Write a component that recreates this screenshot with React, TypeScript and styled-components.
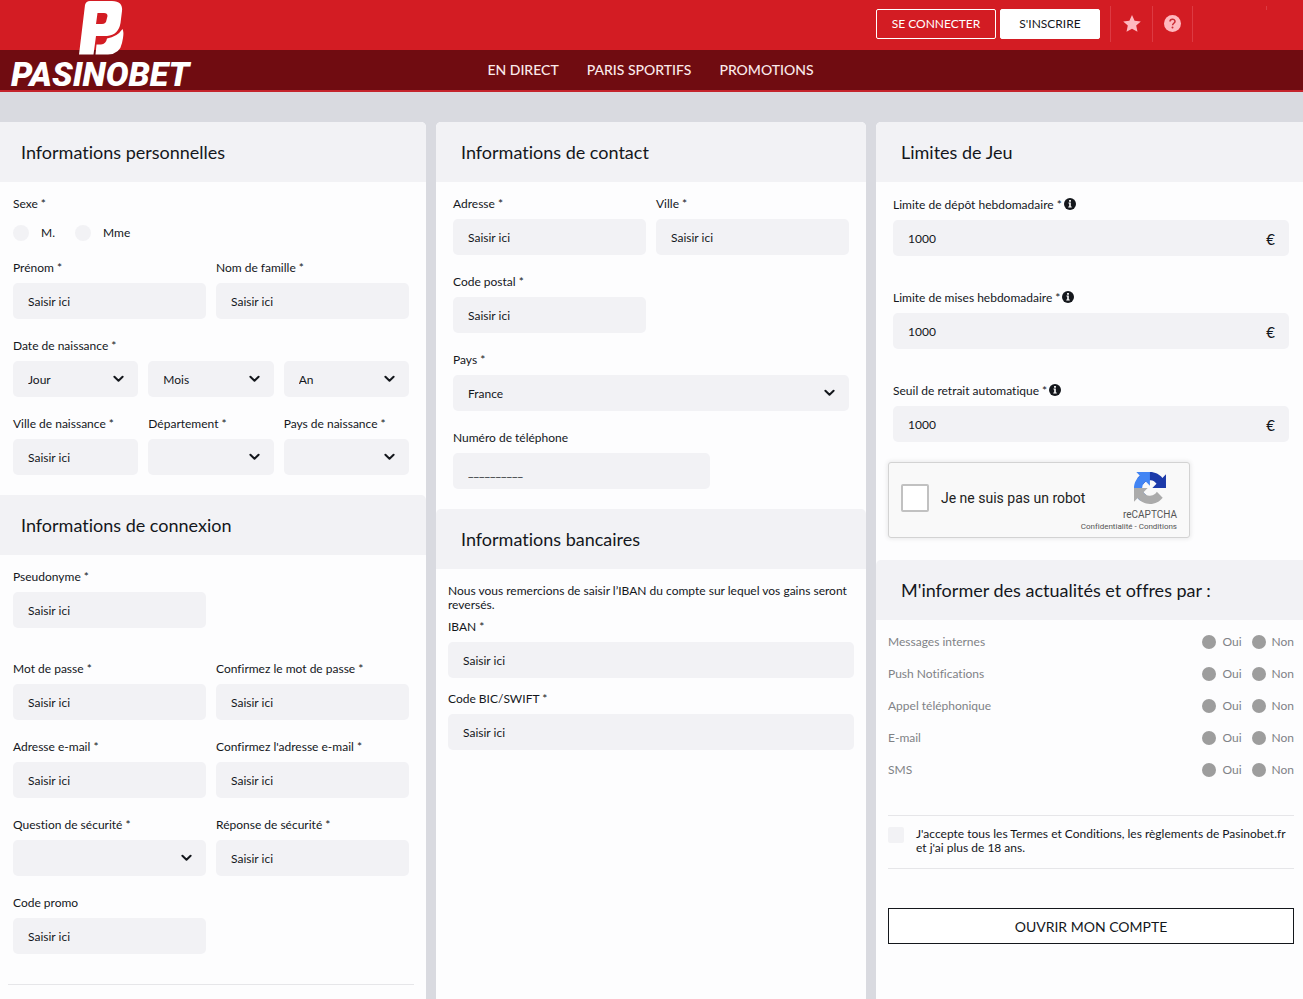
import React, { useId } from 'react';
import styled, { createGlobalStyle } from 'styled-components';

const ink = '#14171c';
const field = '#f2f2f5';

const GlobalStyle = createGlobalStyle`
  *, *::before, *::after { box-sizing: border-box; }
  html, body { margin: 0; padding: 0; }
  body {
    background: #d9dae0;
    color: ${ink};
    font-family: Lato, "Open Sans", sans-serif;
    font-size: 12px;
    font-variant-ligatures: none;
    line-height: 14px;
  }
  button, input, select { font: inherit; color: inherit; margin: 0; }
`;

const Page = styled.div`
  display: flex;
  flex-direction: column;
  min-height: 100vh;
`;

const Header = styled.header`
  position: relative;
  border-bottom: 2px solid #c4232c;
  margin-bottom: 30px;
`;

const TopBar = styled.div`
  display: flex;
  justify-content: flex-end;
  align-items: center;
  height: 50px;
  padding: 0 36px 2px 0;
  background: #d31c23;
`;

const NavBar = styled.nav`
  display: flex;
  justify-content: center;
  align-items: center;
  gap: 28px;
  height: 40px;
  padding-right: 2px;
  background: #700c11;
`;

const NavLink = styled.a`
  color: #fbe9ea;
  font-size: 14px;
  font-weight: 500;
  line-height: 20px;
  text-decoration: none;
`;

const LogoLink = styled.a`
  position: absolute;
  left: 11px;
  top: 0;
  display: flex;
  flex-direction: column;
  color: #fff;
  text-decoration: none;
`;

const Emblem = styled.svg`
  display: block;
  width: 46px;
  height: 56px;
  margin-left: 67px;
`;

const Wordmark = styled.span`
  font-family: Roboto, "Liberation Sans", sans-serif;
  font-size: 34px;
  font-weight: 900;
  font-style: italic;
  line-height: 36px;
`;

const TopActions = styled.div`
  display: flex;
  gap: 4px;
  margin-right: 10px;
`;

const TopButton = styled.button<{ $solid?: boolean }>`
  width: ${p => (p.$solid ? 100 : 120)}px;
  height: 30px;
  padding: 0;
  border: 1px solid #fff;
  border-radius: 2px;
  background: ${p => (p.$solid ? '#fff' : 'transparent')};
  color: ${p => (p.$solid ? ink : '#fff')};
  cursor: pointer;
`;

const IconButton = styled.button<{ $width: number }>`
  display: flex;
  align-items: center;
  justify-content: center;
  width: ${p => p.$width}px;
  height: 36px;
  padding: 0 0 1px;
  border: 0;
  border-left: 1px solid #dd3a42;
  background: none;
  color: #ffb9bf;
  cursor: pointer;
`;

const TopSpacer = styled.div`
  display: flex;
  justify-content: flex-end;
  width: 75px;
  height: 36px;
  border-left: 1px solid #dd3a42;
  &::after {
    content: "";
    width: 1px;
    height: 4px;
    background: #dd3a42;
  }
`;

const Columns = styled.main`
  flex: 1;
  display: grid;
  grid-template-columns: 426fr 430fr 427fr;
  gap: 10px;
`;

const PanelTitle = styled.h2<{ $inset?: number }>`
  display: flex;
  align-items: center;
  height: 60px;
  margin: 0;
  padding-left: ${p => p.$inset ?? 25}px;
  border-radius: 5px 5px 0 0;
  background: ${field};
  font-size: 18px;
  font-weight: 400;
  line-height: 24px;
`;

const Panel = styled.section`
  min-width: 0;
  background: #fdfdfe;
  border-radius: 5px 5px 0 0;
  &:first-child, &:first-child > ${PanelTitle} { border-top-left-radius: 0; }
  &:last-child, &:last-child > ${PanelTitle} { border-top-right-radius: 0; }
`;

const Fields = styled.div<{ $left?: number; $right?: number; $gap?: number }>`
  display: flex;
  flex-direction: column;
  gap: ${p => p.$gap ?? 20}px;
  padding: 15px ${p => p.$right ?? 17}px 20px ${p => p.$left ?? 17}px;
`;

const Row = styled.div<{ $cols?: number; $extra?: boolean }>`
  display: grid;
  grid-template-columns: repeat(${p => p.$cols ?? 2}, minmax(0, 1fr));
  gap: 10px;
  padding-bottom: ${p => (p.$extra ? 14 : 0)}px;
`;

const FieldBox = styled.div`
  display: flex;
  flex-direction: column;
  gap: 8px;
  min-width: 0;
`;

const Label = styled.label`
  display: flex;
  align-items: center;
  gap: 2px;
  white-space: nowrap;
`;

const Control = styled.div<{ $width?: string }>`
  position: relative;
  width: ${p => p.$width ?? '100%'};
`;

const TextInput = styled.input`
  display: block;
  width: 100%;
  height: 36px;
  padding: 0 15px;
  border: 0;
  border-radius: 5px;
  background: ${field};
  &::placeholder { color: ${ink}; opacity: 1; }
`;

const SelectInput = styled.select`
  display: block;
  appearance: none;
  width: 100%;
  height: 36px;
  padding: 2px 30px 0 15px;
  border: 0;
  border-radius: 5px;
  background: ${field};
`;

const ChevronIcon = styled.svg`
  position: absolute;
  right: 14px;
  top: 14px;
  width: 11px;
  height: 8px;
  pointer-events: none;
`;

const Euro = styled.span`
  position: absolute;
  right: 14px;
  top: 9px;
  font-size: 15px;
  line-height: 20px;
`;

const Choices = styled.fieldset`
  margin: 0;
  padding: 0;
  border: 0;
`;

const Legend = styled.legend`
  padding: 0;
  margin-bottom: 14px;
`;

const ChoiceRow = styled.div`
  display: flex;
  gap: 20px;
`;

const ChoiceLabel = styled.label<{ $gap?: number }>`
  display: flex;
  align-items: center;
  gap: ${p => p.$gap ?? 12}px;
  height: 16px;
`;

const Radio = styled.input<{ $size?: number; $color?: string }>`
  appearance: none;
  flex: none;
  width: ${p => p.$size ?? 16}px;
  height: ${p => p.$size ?? 16}px;
  border-radius: 50%;
  background: ${p => p.$color ?? field};
  &:checked { border: 4px solid #700c11; }
`;

const Note = styled.p`
  margin: 0 0 -6px;
`;

const Divider = styled.hr`
  width: 100%;
  height: 1px;
  margin: 0;
  border: 0;
  background: #e6e6e9;
`;

const FooterRule = styled.div`
  padding: 10px 12px 14px 8px;
`;

const CaptchaBox = styled.div`
  display: flex;
  align-items: center;
  width: 302px;
  height: 76px;
  margin: 0 0 22px 12px;
  padding: 0 12px 4px;
  border: 1px solid #d3d3d3;
  border-radius: 3px;
  background: #f9f9f9;
  box-shadow: 0 0 4px 1px rgba(0, 0, 0, 0.08);
  font-family: Roboto, sans-serif;
`;

const CaptchaCheck = styled.input`
  appearance: none;
  flex: none;
  width: 28px;
  height: 28px;
  border: 2px solid #c1c1c1;
  border-radius: 2px;
  background: #fff;
  &:checked { background: #4a90e2; }
`;

const CaptchaLabel = styled.label`
  margin-left: 12px;
  font-size: 14px;
  line-height: 18px;
  white-space: nowrap;
  color: #222;
`;

const CaptchaBrand = styled.div`
  display: flex;
  flex-direction: column;
  align-items: flex-end;
  margin-left: -12px;
  flex: 1;
  padding-top: 8px;
  color: #555;
  font-size: 10px;
  line-height: 14px;
`;

const CaptchaLogo = styled.svg`
  width: 32px;
  height: 32px;
  margin: 0 11px 4px 0;
`;

const CaptchaLinks = styled.div`
  font-size: 8px;
  line-height: 10px;
  white-space: nowrap;
  a { color: inherit; text-decoration: none; }
`;

const Channels = styled.div`
  padding: 6px 9px 29px 12px;
  color: #808286;
`;

const Channel = styled.div`
  display: flex;
  align-items: center;
  justify-content: space-between;
  height: 32px;
`;

const ChannelChoices = styled.div`
  display: flex;
  gap: 10px;
`;

const Consent = styled.div`
  display: flex;
  flex-direction: column;
  padding: 0 9px 40px 12px;
`;

const ConsentLabel = styled.label`
  display: flex;
  gap: 12px;
  padding: 11px 7px 13px 0;
`;

const Checkbox = styled.input`
  appearance: none;
  flex: none;
  width: 16px;
  height: 16px;
  border-radius: 2px;
  background: ${field};
  &:checked { background: #700c11; }
`;

const Submit = styled.button`
  width: 100%;
  height: 36px;
  margin-top: 39px;
  padding: 2px 0 0;
  border: 1px solid ${ink};
  background: #fff;
  font-size: 14px;
  cursor: pointer;
`;

type FieldProps = {
  label: string;
  value?: string;
  options?: string[];
  euro?: boolean;
  width?: string;
};

function Chevron() {
  return (
    <ChevronIcon viewBox="0 0 11 8" aria-hidden="true">
      <path d="M1.4 1.7 5.5 5.7 9.6 1.7" fill="none" stroke={ink} strokeWidth="2" strokeLinecap="round" strokeLinejoin="round" />
    </ChevronIcon>
  );
}

function Field({ label, value, options, euro, width }: FieldProps) {
  const id = useId();
  return (
    <FieldBox>
      <Label htmlFor={id}>
        {label}
        {euro && <InfoIcon />}
      </Label>
      <Control $width={width}>
        {options ? (
          <>
            <SelectInput id={id}>
              {options.map(o => <option key={o}>{o}</option>)}
            </SelectInput>
            <Chevron />
          </>
        ) : (
          <TextInput id={id} type="text" placeholder="Saisir ici" defaultValue={value} />
        )}
        {euro && <Euro>€</Euro>}
      </Control>
    </FieldBox>
  );
}

function InfoIcon() {
  return (
    <svg width="12" height="15" viewBox="0 0 12 15" aria-hidden="true">
      <circle cx="6" cy="7" r="6" fill={ink} />
      <path d="M4.5 5.6h2.3v3.9h.9v1H4.3v-1h.9V6.6h-.7zM5.1 3h1.8v1.7H5.1z" fill="#fff" />
    </svg>
  );
}

function Logo() {
  return (
    <LogoLink href="#" aria-label="Pasinobet">
      <Emblem viewBox="78 0 46 56" aria-hidden="true">
        <path
          fill="#fff"
          fillRule="evenodd"
          d="M90 1H112Q123 1 122 11L120.500 23Q118.500 35 107 36H96L93.500 54.500H79L85 5Q86 1 90 1ZM97.500 13 96 24H102Q106 24 106.500 20L107.500 16Q107.500 13 104 13Z"
        />
        <path fill="#fff" d="M122.500 29Q124 32 123 38L122 43Q120 54 108 54.500H95.500L96.500 44.500H101Q106 44 107 38.500Q117 37 122.500 29Z" />
      </Emblem>
      <Wordmark>PASINOBET</Wordmark>
    </LogoLink>
  );
}

const channels = ['Messages internes', 'Push Notifications', 'Appel téléphonique', 'E-mail', 'SMS'];

export default function App() {
  return (
    <Page>
      <GlobalStyle />
      <Header>
        <TopBar>
          <TopActions>
            <TopButton type="button">SE CONNECTER</TopButton>
            <TopButton type="button" $solid>S'INSCRIRE</TopButton>
          </TopActions>
          <IconButton type="button" $width={42} aria-label="Favoris">
            <svg width="18" height="17" viewBox="0 0 18 17">
              <path fill="currentColor" d="M9 0l2.600 5.700 6.200.7-4.600 4.200 1.300 6.200L9 13.700l-5.500 3.100 1.300-6.200L.2 6.400l6.200-.7z" />
            </svg>
          </IconButton>
          <IconButton type="button" $width={40} aria-label="Aide">
            <svg width="17" height="17" viewBox="0 0 17 17">
              <circle cx="8.500" cy="8.500" r="8.500" fill="currentColor" />
              <path d="M6 6.600C6 3.400 11 3.500 11 6.400c0 1.900-2.400 1.800-2.400 3.900" fill="none" stroke="#c92a33" strokeWidth="1.500" />
              <circle cx="8.500" cy="12.400" r="1" fill="#c92a33" />
            </svg>
          </IconButton>
          <TopSpacer />
        </TopBar>
        <NavBar>
          <NavLink href="#">EN DIRECT</NavLink>
          <NavLink href="#">PARIS SPORTIFS</NavLink>
          <NavLink href="#">PROMOTIONS</NavLink>
        </NavBar>
        <Logo />
      </Header>

      <Columns>
        <Panel>
          <PanelTitle $inset={21}>Informations personnelles</PanelTitle>
          <Fields $left={13}>
            <Choices>
              <Legend>Sexe *</Legend>
              <ChoiceRow>
                <ChoiceLabel><Radio type="radio" name="sexe" />M.</ChoiceLabel>
                <ChoiceLabel><Radio type="radio" name="sexe" />Mme</ChoiceLabel>
              </ChoiceRow>
            </Choices>
            <Row>
              <Field label="Prénom *" />
              <Field label="Nom de famille *" />
            </Row>
            <FieldBox role="group" aria-labelledby="birth">
              <Label as="span" id="birth">Date de naissance *</Label>
              <Row $cols={3}>
                {['Jour', 'Mois', 'An'].map(part => (
                  <Control key={part}>
                    <SelectInput aria-label={part}><option>{part}</option></SelectInput>
                    <Chevron />
                  </Control>
                ))}
              </Row>
            </FieldBox>
            <Row $cols={3}>
              <Field label="Ville de naissance *" />
              <Field label="Département *" options={['']} />
              <Field label="Pays de naissance *" options={['']} />
            </Row>
          </Fields>

          <PanelTitle $inset={21}>Informations de connexion</PanelTitle>
          <Fields $left={13}>
            <Row $extra><Field label="Pseudonyme *" /></Row>
            <Row>
              <Field label="Mot de passe *" />
              <Field label="Confirmez le mot de passe *" />
            </Row>
            <Row>
              <Field label="Adresse e-mail *" />
              <Field label="Confirmez l'adresse e-mail *" />
            </Row>
            <Row>
              <Field label="Question de sécurité *" options={['']} />
              <Field label="Réponse de sécurité *" />
            </Row>
            <Row><Field label="Code promo" /></Row>
          </Fields>
          <FooterRule><Divider /></FooterRule>
        </Panel>

        <Panel>
          <PanelTitle>Informations de contact</PanelTitle>
          <Fields>
            <Row>
              <Field label="Adresse *" />
              <Field label="Ville *" />
            </Row>
            <Row><Field label="Code postal *" /></Row>
            <Field label="Pays *" options={['France']} />
            <Field label="Numéro de téléphone" value="__________" width="65%" />
          </Fields>

          <PanelTitle>Informations bancaires</PanelTitle>
          <Fields $left={12} $right={12} $gap={14}>
            <Note>Nous vous remercions de saisir l’IBAN du compte sur lequel vos gains seront reversés.</Note>
            <Field label="IBAN *" />
            <Field label="Code BIC/SWIFT *" />
          </Fields>
        </Panel>

        <Panel>
          <PanelTitle>Limites de Jeu</PanelTitle>
          <Fields $right={14} $gap={34}>
            <Field label="Limite de dépôt hebdomadaire *" value="1000" euro />
            <Field label="Limite de mises hebdomadaire *" value="1000" euro />
            <Field label="Seuil de retrait automatique *" value="1000" euro />
          </Fields>
          <CaptchaBox>
            <CaptchaCheck type="checkbox" id="robot" />
            <CaptchaLabel htmlFor="robot">Je ne suis pas un robot</CaptchaLabel>
            <CaptchaBrand>
              <CaptchaLogo viewBox="0 0 64 64" aria-hidden="true">
                <path fill="#1c3aa9" d="M64 31.955l-.033-1.370V4.687l-7.160 7.160C50.948 4.674 42.033.093 32.050.093c-10.400 0-19.622 4.960-25.458 12.640l11.736 11.860a15.550 15.550 0 0 1 4.754-5.334c2.050-1.600 4.952-2.906 8.968-2.906.485 0 .860.057 1.135.163 4.976.393 9.288 3.140 11.828 7.124l-8.307 8.307L64 31.953" />
                <path fill="#4285f4" d="M31.862.094l-1.370.033H4.594l7.160 7.160C4.580 13.147 0 22.060 0 32.046c0 10.400 4.960 19.622 12.640 25.458L24.500 45.768a15.550 15.550 0 0 1-5.334-4.754c-1.600-2.050-2.906-4.952-2.906-8.968 0-.485.057-.860.163-1.135.393-4.976 3.140-9.288 7.124-11.828l8.307 8.307L31.860.095" />
                <path fill="#ababab" d="M.001 32.045l.033 1.370v25.898l7.160-7.160c5.860 7.173 14.774 11.754 24.760 11.754 10.400 0 19.622-4.960 25.458-12.640l-11.736-11.860a15.550 15.550 0 0 1-4.754 5.334c-2.050 1.600-4.952 2.906-8.968 2.906-.485 0-.860-.057-1.135-.163-4.976-.393-9.288-3.140-11.828-7.124l8.307-8.307L0 32.047" />
              </CaptchaLogo>
              <span>reCAPTCHA</span>
              <CaptchaLinks>
                <a href="#">Confidentialité</a> - <a href="#">Conditions</a>
              </CaptchaLinks>
            </CaptchaBrand>
          </CaptchaBox>

          <PanelTitle>M'informer des actualités et offres par :</PanelTitle>
          <Channels>
            {channels.map(name => (
              <Channel key={name} role="radiogroup" aria-label={name}>
                <span>{name}</span>
                <ChannelChoices>
                  {['Oui', 'Non'].map(answer => (
                    <ChoiceLabel key={answer} $gap={6}>
                      <Radio type="radio" name={name} $size={14} $color="#9d9d9d" />
                      {answer}
                    </ChoiceLabel>
                  ))}
                </ChannelChoices>
              </Channel>
            ))}
          </Channels>
          <Consent>
            <Divider />
            <ConsentLabel>
              <Checkbox type="checkbox" />
              <span>J'accepte tous les Termes et Conditions, les règlements de Pasinobet.fr et j'ai plus de 18 ans.</span>
            </ConsentLabel>
            <Divider />
            <Submit type="submit">OUVRIR MON COMPTE</Submit>
          </Consent>
        </Panel>
      </Columns>
    </Page>
  );
}
